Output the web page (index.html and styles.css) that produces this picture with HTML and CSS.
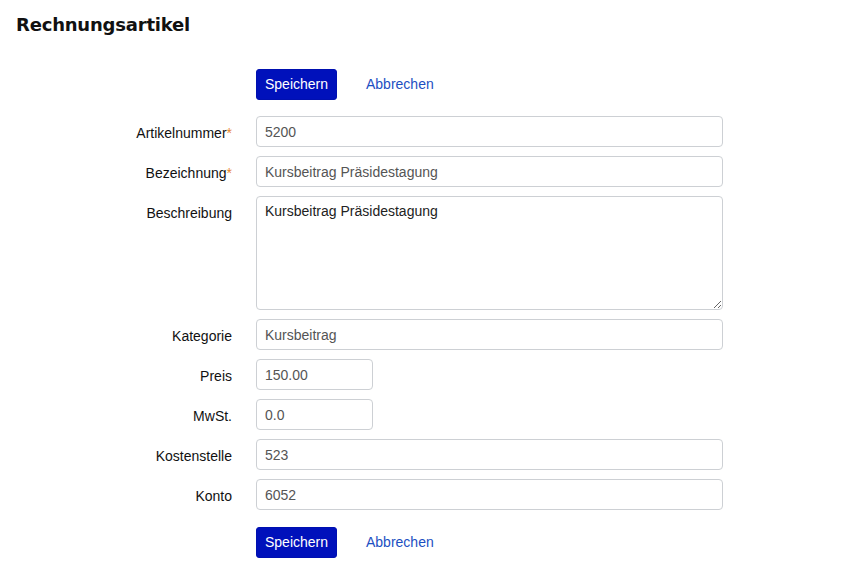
FILE: index.html
```html
<!DOCTYPE html>
<html lang="de">
<head>
<meta charset="utf-8">
<title>Rechnungsartikel</title>
<link rel="stylesheet" href="styles.css">
</head>
<body>
<h1 class="title">Rechnungsartikel</h1>
<form class="form">
  <div class="label"></div>
  <div class="actions"><button type="button" class="btn">Speichern</button><a class="cancel" href="#">Abbrechen</a></div>

  <label class="label">Artikelnummer<span class="req">*</span></label>
  <input class="field" type="text" value="5200">

  <label class="label">Bezeichnung<span class="req">*</span></label>
  <input class="field" type="text" value="Kursbeitrag Präsidestagung">

  <label class="label">Beschreibung</label>
  <textarea class="field area">Kursbeitrag Präsidestagung</textarea>

  <label class="label">Kategorie</label>
  <input class="field" type="text" value="Kursbeitrag">

  <label class="label">Preis</label>
  <div><input class="field short" type="text" value="150.00"></div>

  <label class="label">MwSt.</label>
  <div><input class="field short" type="text" value="0.0"></div>

  <label class="label">Kostenstelle</label>
  <input class="field" type="text" value="523">

  <label class="label">Konto</label>
  <input class="field" type="text" value="6052">

  <div class="label"></div>
  <div class="actions"><button type="button" class="btn">Speichern</button><a class="cancel" href="#">Abbrechen</a></div>
</form>
</body>
</html>
```
FILE: styles.css
```css
html, body {
  margin: 0;
  padding: 0;
  background: #fff;
}
body {
  font-family: "Liberation Sans", Arial, sans-serif;
  font-size: 14px;
  color: #222;
}
.title {
  margin: 0;
  padding: 12px 0 0 16px;
  font-family: "DejaVu Sans", "Liberation Sans", sans-serif;
  font-weight: bold;
  font-size: 18px;
  line-height: 26px;
  color: #111;
  letter-spacing: -0.2px;
}
.form {
  display: grid;
  grid-template-columns: 232px 467px;
  column-gap: 24px;
  row-gap: 9px;
  margin-top: 31px;
}
.label {
  text-align: right;
  padding-top: 9px;
  line-height: 16px;
  color: #111;
}
.req {
  color: #e8862f;
}
.actions {
  display: flex;
  align-items: center;
  gap: 29px;
  height: 31px;
  margin-bottom: 7px;
}
.actions:last-child {
  margin-top: 8px;
  margin-bottom: 0;
}
.btn {
  height: 31px;
  width: 81px;
  padding: 0 0 1px;
  border: 1px solid #0010b0;
  border-radius: 3px;
  background: #0011bb;
  color: #fff;
  font-family: "Liberation Sans", Arial, sans-serif;
  font-size: 14px;
}
.cancel {
  color: #1c4fc2;
  text-decoration: none;
  margin-top: -1px;
}
.field {
  display: block;
  box-sizing: border-box;
  width: 467px;
  height: 31px;
  margin: 0;
  padding: 6px 8px;
  border: 1px solid #cdd0d4;
  border-radius: 4px;
  font-family: "Liberation Sans", Arial, sans-serif;
  font-size: 14px;
  line-height: 17px;
  color: #555;
  background: #fff;
}
.area {
  height: 114px;
  resize: vertical;
  padding-top: 6px;
  color: #222;
}
.short {
  width: 117px;
}
```
